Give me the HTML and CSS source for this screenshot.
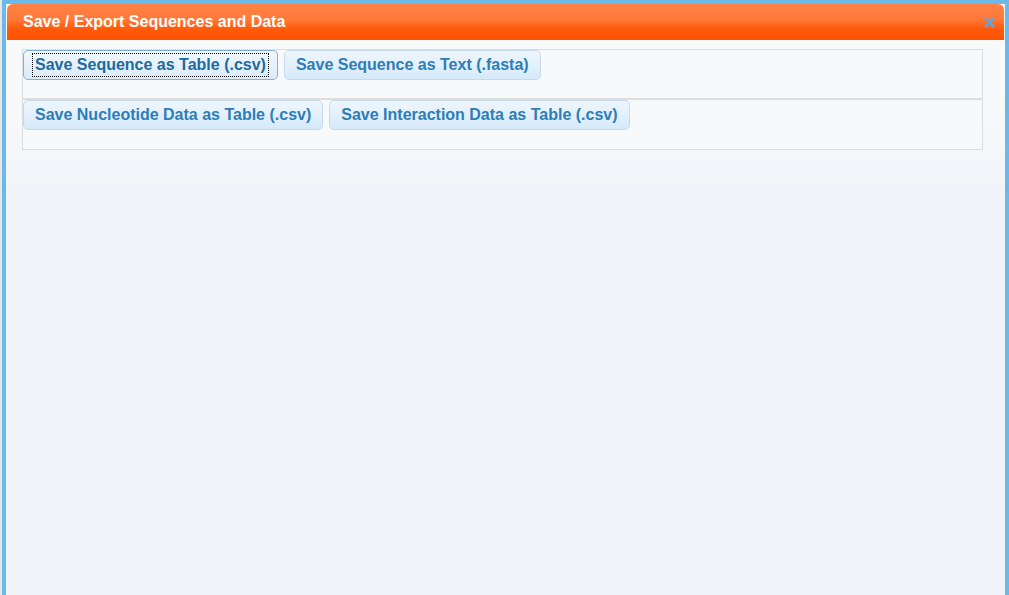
FILE: index.html
```html
<!DOCTYPE html>
<html>
<head>
<meta charset="utf-8">
<link rel="stylesheet" href="styles.css">
</head>
<body>
<div class="dialog">
  <div class="titlebar">
    <span class="title">Save / Export Sequences and Data</span>
    <span class="close" aria-label="close">
      <svg width="11" height="11" viewBox="0 0 11 11"><path d="M2 2 L9 9 M9 2 L2 9" stroke="#69a3d3" stroke-width="3" stroke-linecap="round"/></svg>
    </span>
  </div>
  <div class="content">
    <div class="panel">
      <div class="row">
        <button class="btn btn-focus"><span class="focus-ring">Save Sequence as Table (.csv)</span></button>
        <button class="btn">Save Sequence as Text (.fasta)</button>
      </div>
      <div class="row row-second">
        <button class="btn">Save Nucleotide Data as Table (.csv)</button>
        <button class="btn">Save Interaction Data as Table (.csv)</button>
      </div>
    </div>
  </div>
</div>
</body>
</html>
```
FILE: styles.css
```css
html, body {
  margin: 0;
  padding: 0;
  height: 100%;
  background: #e6e6e6;
  font-family: "Liberation Sans", Arial, sans-serif;
}
body {
  padding-left: 2px;
  box-sizing: border-box;
  overflow: hidden;
}
.dialog {
  height: 100%;
  box-sizing: border-box;
  border: 4px solid #6cb8e9;
  border-bottom: none;
  background: linear-gradient(to bottom, #f8f9fb 0px, #f8f9fb 90px, #f0f4f8 200px, #f0f4f8 100%);
  display: flex;
  flex-direction: column;
}
.titlebar {
  margin: 0 1px;
  height: 36px;
  border-radius: 6px 6px 0 0;
  background: linear-gradient(to bottom, #ff8245 0%, #ff7a3a 40%, #ff5a0a 70%, #ff5200 100%);
  display: flex;
  align-items: center;
  justify-content: space-between;
  padding: 0 9px 0 16px;
}
.title {
  color: #ffffff;
  font-weight: bold;
  font-size: 16px;
  margin-top: -1px;
}
.close {
  display: flex;
  align-items: center;
  margin-top: 1px;
}
.content {
  padding: 9px 22px 0 16px;
}
.panel {
  display: flex;
  flex-direction: column;
}
.row {
  border: 1px solid #dddddd;
  background: #f8f9fb;
  height: 48px;
  display: flex;
  gap: 6px;
  align-items: flex-start;
}
.row-second {
  height: 49px;
}
.btn {
  height: 30px;
  padding: 0 11px;
  border: 1px solid #c5dbec;
  border-radius: 5px;
  background: linear-gradient(to bottom, #eef6fd 0%, #e2f0fc 50%, #d6eafa 100%);
  color: #2e7db5;
  font-family: "Liberation Sans", Arial, sans-serif;
  font-weight: bold;
  font-size: 16px;
  cursor: pointer;
}
.btn-focus {
  border-color: #7fb3dd;
  color: #1f6a9c;
  padding: 0 9px;
  background: linear-gradient(to bottom, #f2f8fd 0%, #e6f1fb 50%, #dbecf9 100%);
}
.focus-ring {
  display: inline-block;
  outline: 1px dotted #000;
  padding: 1px 2px 2px 2px;
  line-height: 19px;
}
```
